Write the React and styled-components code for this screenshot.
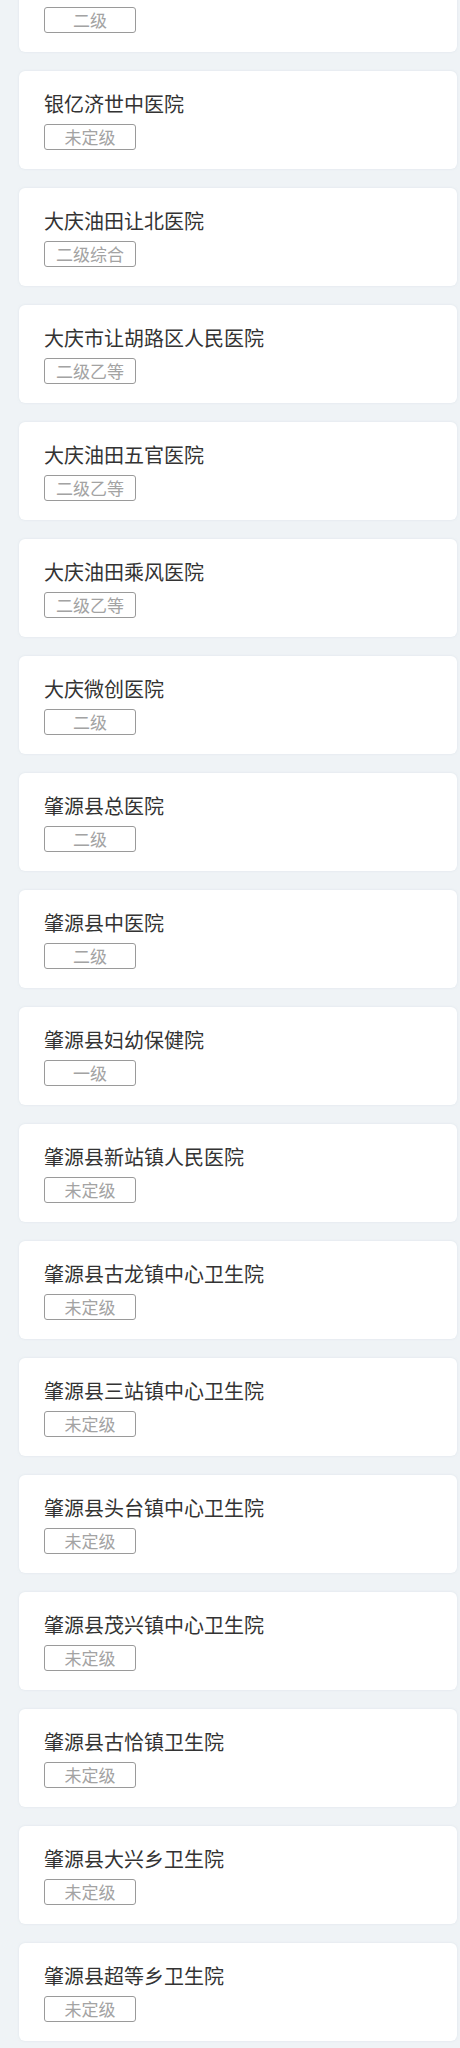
import React from "react";
import styled, { createGlobalStyle } from "styled-components";

const GlobalStyle = createGlobalStyle`
  html, body {
    margin: 0;
    padding: 0;
    background: #eff3f6;
    font-family: "Noto Sans CJK SC", "Noto Sans", sans-serif;
  }
`;

const List = styled.div`
  display: flex;
  flex-direction: column;
  gap: 19px;
  padding: 0 3px 7px 19px;
  margin-top: -46px;
`;

const Card = styled.div`
  background: #fff;
  border-radius: 6px;
  box-shadow: 0 0 2px rgba(200, 210, 220, 0.5);
  padding: 18px 25px 19px;
  height: 98px;
  box-sizing: border-box;
  display: flex;
  flex-direction: column;
  align-items: flex-start;
  gap: 5px;
`;

const Name = styled.div`
  font-size: 20px;
  line-height: 30px;
  color: #333;
`;

const Tag = styled.span`
  box-sizing: border-box;
  width: 92px;
  height: 26px;
  border: 1px solid #9a9a9a;
  border-radius: 3px;
  color: #a3a3a3;
  font-size: 17px;
  line-height: 24px;
  text-align: center;
`;

const hospitals = [
  ["大庆油田总医院", "二级"],
  ["银亿济世中医院", "未定级"],
  ["大庆油田让北医院", "二级综合"],
  ["大庆市让胡路区人民医院", "二级乙等"],
  ["大庆油田五官医院", "二级乙等"],
  ["大庆油田乘风医院", "二级乙等"],
  ["大庆微创医院", "二级"],
  ["肇源县总医院", "二级"],
  ["肇源县中医院", "二级"],
  ["肇源县妇幼保健院", "一级"],
  ["肇源县新站镇人民医院", "未定级"],
  ["肇源县古龙镇中心卫生院", "未定级"],
  ["肇源县三站镇中心卫生院", "未定级"],
  ["肇源县头台镇中心卫生院", "未定级"],
  ["肇源县茂兴镇中心卫生院", "未定级"],
  ["肇源县古恰镇卫生院", "未定级"],
  ["肇源县大兴乡卫生院", "未定级"],
  ["肇源县超等乡卫生院", "未定级"],
];

export default function App() {
  return (
    <>
      <GlobalStyle />
      <List>
        {hospitals.map(([name, level], i) => (
          <Card key={i}>
            <Name>{name}</Name>
            <Tag>{level}</Tag>
          </Card>
        ))}
      </List>
    </>
  );
}
